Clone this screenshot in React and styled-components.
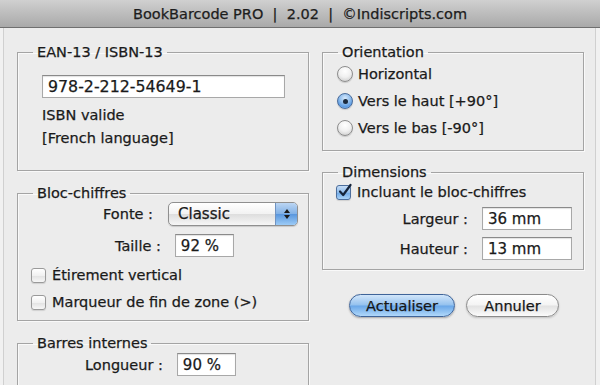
import React from 'react'
import styled, { createGlobalStyle } from 'styled-components'

const Global = createGlobalStyle`
  html, body {
    margin: 0;
    padding: 0;
    background: #f1f1f1;
    overflow: hidden;
  }
  body {
    font-family: "DejaVu Sans", "Liberation Sans", sans-serif;
    font-size: 14.5px;
    color: #1a1a1a;
    -webkit-text-stroke: 0.25px #1a1a1a;
  }
`

const Window = styled.div`
  width: 600px;
  height: 385px;
  display: flex;
  flex-direction: column;
`

const TitleBar = styled.div`
  height: 27px;
  flex: none;
  display: flex;
  align-items: center;
  justify-content: center;
  white-space: pre;
  font-size: 14.5px;
  color: #1e1e1e;
  background: linear-gradient(#d0d0d0, #a9a9a9);
  border-bottom: 1px solid #6f6f6f;
`

const Frame = styled.div`
  flex: 1;
  margin: 0 4px 0 3px;
  border-left: 1px solid #d0d0d0;
  border-right: 1px solid #d0d0d0;
  background: #ececec;
  display: flex;
  gap: 13px;
  padding: 15px 0 0 13px;
`

const Column = styled.div`
  width: ${p => p.$width}px;
  display: flex;
  flex-direction: column;
`

const Group = styled.fieldset`
  margin: ${p => p.$mt || 0}px 0 0 0;
  padding: 0;
  min-width: 0;
  border: 1px solid #a4a4a4;
  box-shadow: inset 1px 1px 0 #f9f9f9, 1px 1px 0 #f9f9f9;
`

const Legend = styled.legend`
  margin-left: 15px;
  padding: 0 4px;
  line-height: 18px;
`

const Content = styled.div`
  padding: ${p => p.$pad};
  display: flex;
  flex-direction: column;
`

const TextField = styled.div`
  width: ${p => p.$width}px;
  height: 23px;
  box-sizing: border-box;
  background: #fff;
  border: 1px solid #a8a8a8;
  border-top-color: #8a8a8a;
  box-shadow: inset 0 1px 1px rgba(0, 0, 0, 0.12);
  padding-left: 5px;
  display: flex;
  align-items: center;
  font-size: ${p => p.$size || 15}px;
  margin-top: ${p => p.$mt || 0}px;
`

const Info = styled.div`
  line-height: 23px;
  margin-top: 6px;
`

const Row = styled.div`
  display: flex;
  align-items: center;
  gap: ${p => p.$gap || 14}px;
  padding-left: ${p => p.$indent || 0}px;
  margin-top: ${p => p.$mt || 0}px;
  height: ${p => p.$h || 23}px;
`

const FieldRow = styled.div`
  display: grid;
  grid-template-columns: 132px 90px;
  column-gap: 14px;
  align-items: center;
  margin-top: ${p => p.$mt || 0}px;
`

const RightLabel = styled.span`
  text-align: right;
`

const Select = styled.div`
  width: 130px;
  height: 24px;
  box-sizing: border-box;
  border: 1px solid #8f8f8f;
  border-radius: 5px;
  background: linear-gradient(#ffffff, #f2f2f2 50%, #dedede 52%, #f6f6f6);
  box-shadow: 0 1px 1px rgba(0, 0, 0, 0.15);
  display: flex;
  align-items: stretch;
  overflow: hidden;
  font-size: 15px;
`

const SelectText = styled.span`
  flex: 1;
  padding-left: 9px;
  display: flex;
  align-items: center;
`

const SelectArrows = styled.span`
  width: 21px;
  display: flex;
  align-items: center;
  justify-content: center;
  border-left: 1px solid #6f93c2;
  background: linear-gradient(#bcd6f3, #80b0e6 50%, #5a97de 52%, #9ccbf6);
`

const CheckBox = styled.span`
  width: 15px;
  height: 15px;
  box-sizing: border-box;
  border-radius: 3px;
  border: 1px solid ${p => (p.$checked ? '#4c6e9c' : '#9a9a9a')};
  background: ${p =>
    p.$checked
      ? 'linear-gradient(#c6ddf6, #8dbbeb 50%, #6ea8e6 52%, #a9d3f8)'
      : 'linear-gradient(#ffffff, #f1f1f1 50%, #e2e2e2 52%, #f7f7f7)'};
  box-shadow: 0 1px 1px rgba(0, 0, 0, 0.12);
  position: relative;
  flex: none;
`

const Radio = styled.span`
  width: 16px;
  height: 16px;
  box-sizing: border-box;
  border-radius: 50%;
  border: 1px solid ${p => (p.$checked ? '#4a6c9b' : '#8d8d8d')};
  background: ${p =>
    p.$checked
      ? 'radial-gradient(circle at 50% 30%, #d5e8fb 0%, #8ebcec 45%, #5f9de3 70%, #9fcdf7 100%)'
      : 'radial-gradient(circle at 50% 30%, #ffffff 0%, #f0f0f0 50%, #d6d6d6 80%, #f3f3f3 100%)'};
  box-shadow: 0 1px 1px rgba(0, 0, 0, 0.15);
  display: flex;
  align-items: center;
  justify-content: center;
  flex: none;
`

const Dot = styled.span`
  width: 5px;
  height: 5px;
  border-radius: 50%;
  background: #1b2a3d;
`

const RadioRow = styled.div`
  display: flex;
  align-items: center;
  gap: 5px;
  height: 26px;
`

const RadioList = styled.div`
  display: flex;
  flex-direction: column;
  gap: 1px;
`

const Buttons = styled.div`
  display: flex;
  justify-content: center;
  gap: 11px;
  margin-top: 24px;
  padding-left: 2px;
`

const Button = styled.div`
  width: ${p => p.$width}px;
  height: 23px;
  box-sizing: border-box;
  border-radius: 12px;
  display: flex;
  align-items: center;
  justify-content: center;
  font-size: 14.5px;
  color: #141414;
  border: 1px solid ${p => (p.$primary ? '#3f6499' : '#8a8a8a')};
  background: ${p =>
    p.$primary
      ? 'linear-gradient(#d2e6fa, #94c1ee 48%, #6aa7e8 52%, #b0d8fa)'
      : 'linear-gradient(#ffffff, #f4f4f4 48%, #e2e2e2 52%, #fbfbfb)'};
  box-shadow: 0 1px 2px rgba(0, 0, 0, ${p => (p.$primary ? 0.3 : 0.18)});
`

const Check = () => (
  <svg width="16" height="16" viewBox="0 0 16 16" style={{ position: 'absolute', left: 0, top: -3 }}>
    <path d="M3 8.5 L6.2 12 L13.5 2" fill="none" stroke="#15243a" strokeWidth="2.2" strokeLinecap="round" strokeLinejoin="round" />
  </svg>
)

const Arrows = () => (
  <svg width="8" height="12" viewBox="0 0 8 12">
    <path d="M4 1 L7 5 L1 5 Z" fill="#1a1a1a" />
    <path d="M4 11 L7 7 L1 7 Z" fill="#1a1a1a" />
  </svg>
)

const App = () => {
  return (
    <Window>
      <Global />
      <TitleBar>BookBarcode PRO  |  2.02  |  ©Indiscripts.com</TitleBar>
      <Frame>
        <Column $width={292}>
          <Group>
            <Legend>EAN-13 / ISBN-13</Legend>
            <Content $pad="14px 0 20px 24px">
              <TextField $width={243} $size={15.8}>978-2-212-54649-1</TextField>
              <Info>
                ISBN valide
                <br />
                [French language]
              </Info>
            </Content>
          </Group>

          <Group $mt={13}>
            <Legend>Bloc-chiffres</Legend>
            <Content $pad="0 0 7px 13px">
              <Row $indent={72} $gap={15} $h={24}>
                <span>Fonte :</span>
                <Select>
                  <SelectText>Classic</SelectText>
                  <SelectArrows>
                    <Arrows />
                  </SelectArrows>
                </Select>
              </Row>
              <Row $indent={84} $gap={14} $mt={8}>
                <span>Taille :</span>
                <TextField $width={59}>92 %</TextField>
              </Row>
              <Row $gap={6} $mt={7} $h={22}>
                <CheckBox />
                <span>Étirement vertical</span>
              </Row>
              <Row $gap={6} $mt={5} $h={22}>
                <CheckBox />
                <span>Marqueur de fin de zone (&gt;)</span>
              </Row>
            </Content>
          </Group>

          <Group $mt={13}>
            <Legend>Barres internes</Legend>
            <Content $pad="1px 0 30px 13px">
              <Row $indent={54} $gap={14}>
                <span>Longueur :</span>
                <TextField $width={59}>90 %</TextField>
              </Row>
            </Content>
          </Group>
        </Column>

        <Column $width={262}>
          <Group>
            <Legend>Orientation</Legend>
            <Content $pad="0 0 9px 14px">
              <RadioList>
                <RadioRow>
                  <Radio />
                  <span>Horizontal</span>
                </RadioRow>
                <RadioRow>
                  <Radio $checked>
                    <Dot />
                  </Radio>
                  <span>Vers le haut [+90°]</span>
                </RadioRow>
                <RadioRow>
                  <Radio />
                  <span>Vers le bas [-90°]</span>
                </RadioRow>
              </RadioList>
            </Content>
          </Group>

          <Group $mt={12}>
            <Legend>Dimensions</Legend>
            <Content $pad="0 0 9px 13px">
              <Row $gap={6} $h={22}>
                <CheckBox $checked>
                  <Check />
                </CheckBox>
                <span>Incluant le bloc-chiffres</span>
              </Row>
              <FieldRow $mt={4}>
                <RightLabel>Largeur :</RightLabel>
                <TextField $width={90}>36 mm</TextField>
              </FieldRow>
              <FieldRow $mt={7}>
                <RightLabel>Hauteur :</RightLabel>
                <TextField $width={90}>13 mm</TextField>
              </FieldRow>
            </Content>
          </Group>

          <Buttons>
            <Button $primary $width={106}>Actualiser</Button>
            <Button $width={93}>Annuler</Button>
          </Buttons>
        </Column>
      </Frame>
    </Window>
  )
}

export default App
